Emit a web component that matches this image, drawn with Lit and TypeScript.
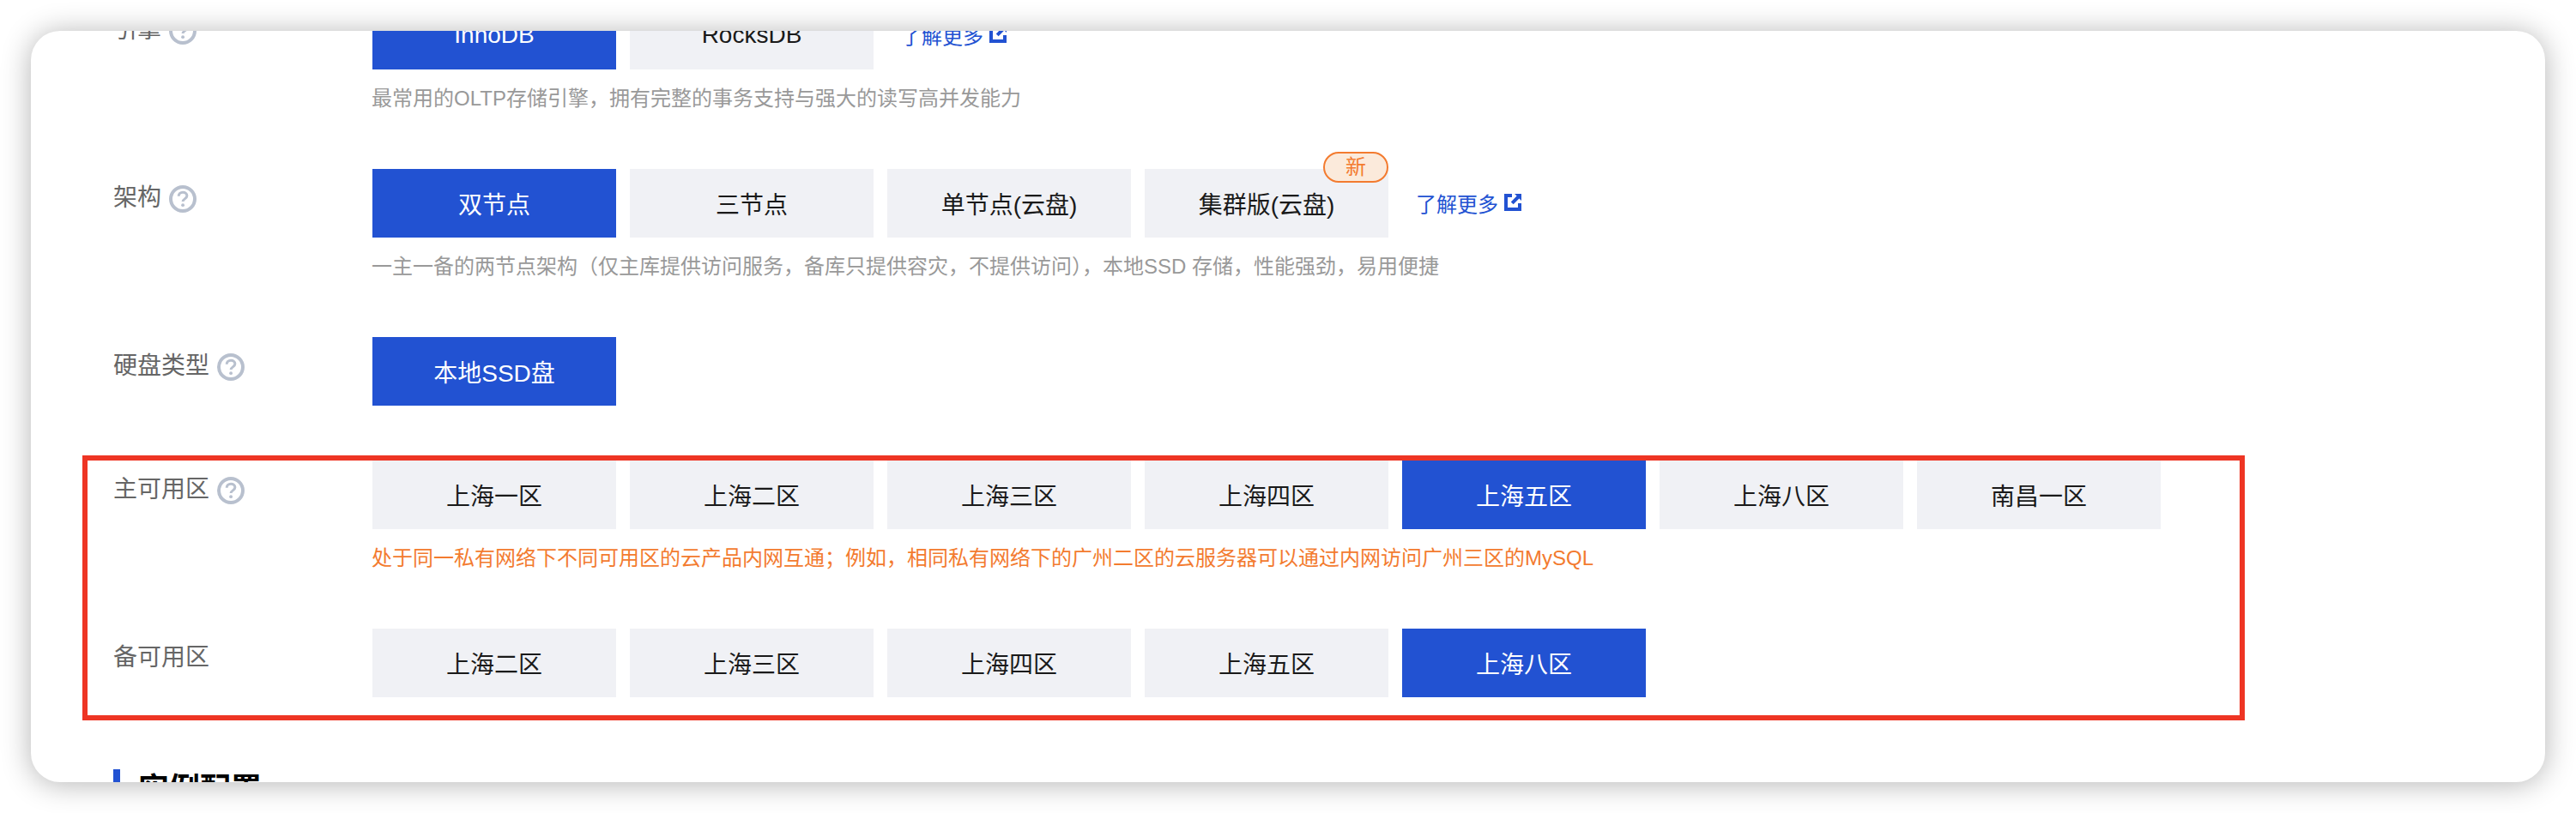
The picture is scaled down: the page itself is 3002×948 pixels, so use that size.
import { LitElement, html, css, svg } from "lit";
import { customElement } from "lit/decorators.js";

type Opt = { text: string; active?: boolean; badge?: string };
type Row = {
  label: string;
  help?: boolean;
  options: Opt[];
  more?: boolean;
  hint?: string;
  warn?: boolean;
};

const names = (list: string[], active: string): Opt[] =>
  list.map((text) => ({ text, active: text === active }));

const rows: Row[] = [
  {
    label: "引擎",
    help: true,
    options: names(["InnoDB", "RocksDB"], "InnoDB"),
    more: true,
    hint: "最常用的OLTP存储引擎，拥有完整的事务支持与强大的读写高并发能力",
  },
  {
    label: "架构",
    help: true,
    options: [
      { text: "双节点", active: true },
      { text: "三节点" },
      { text: "单节点(云盘)" },
      { text: "集群版(云盘)", badge: "新" },
    ],
    more: true,
    hint: "一主一备的两节点架构（仅主库提供访问服务，备库只提供容灾，不提供访问），本地SSD 存储，性能强劲，易用便捷",
  },
  { label: "硬盘类型", help: true, options: names(["本地SSD盘"], "本地SSD盘") },
  {
    label: "主可用区",
    help: true,
    options: names(
      ["上海一区", "上海二区", "上海三区", "上海四区", "上海五区", "上海八区", "南昌一区"],
      "上海五区",
    ),
    hint: "处于同一私有网络下不同可用区的云产品内网互通；例如，相同私有网络下的广州二区的云服务器可以通过内网访问广州三区的MySQL",
    warn: true,
  },
  {
    label: "备可用区",
    options: names(["上海二区", "上海三区", "上海四区", "上海五区", "上海八区"], "上海八区"),
  },
];

const helpIcon = svg`<svg class="help" viewBox="0 0 32 32" aria-hidden="true">
  <circle cx="16" cy="16" r="14" fill="none" stroke="#b8c0ce" stroke-width="4"></circle>
  <path d="M11.2 12.8c0-2.8 2.2-4.6 4.9-4.6s4.8 1.6 4.8 4.1c0 3.6-4.8 3.5-4.8 6.7" fill="none" stroke="#b8c0ce" stroke-width="3"></path>
  <circle cx="16.1" cy="23.2" r="1.9" fill="#b8c0ce"></circle>
</svg>`;

const linkIcon = svg`<svg class="link-icon" viewBox="0 0 20 20" aria-hidden="true">
  <path fill="#2252d2" fill-rule="evenodd" d="M0 0H9V4H4V16H16V11H20V20H0Z"></path>
  <path fill="#2252d2" d="M12 0H20V8L17.4 5.4L10.6 12.2L7.8 9.4L14.6 2.6Z"></path>
</svg>`;

@customElement("app-root")
export class AppRoot extends LitElement {
  static styles = css`
    :host {
      display: block;
      width: 3002px;
      height: 948px;
      background: #fff;
      font-family: "Liberation Sans", "Noto Sans CJK SC", sans-serif;
      overflow: hidden;
    }
    .stage {
      box-sizing: border-box;
      height: 948px;
      padding: 36px;
    }
    .card {
      position: relative;
      height: 876px;
      border-radius: 34px;
      background: #fff;
      box-shadow: 0 2px 34px rgba(0, 0, 0, 0.3);
      overflow: hidden;
    }
    .content {
      margin-top: -35px;
      padding-left: 97px;
      display: flex;
      flex-direction: column;
      gap: 64px;
    }
    .row {
      display: grid;
      grid-template-columns: 301px 1fr;
    }
    .label {
      display: flex;
      align-items: center;
      gap: 8px;
      height: 40px;
      margin: 14px 0 0 -1px;
      font-size: 28px;
      line-height: 40px;
      color: #666;
    }
    .help {
      width: 32px;
      height: 32px;
      flex: none;
      margin: 2px 0 0 1px;
    }
    .options {
      display: flex;
      align-items: center;
      gap: 16px;
    }
    .opt {
      position: relative;
      width: 284px;
      height: 80px;
      display: flex;
      align-items: center;
      justify-content: center;
      font-size: 28px;
      color: #1a1a1a;
      background: #f0f1f5;
    }
    .opt.active {
      background: #2252d2;
      color: #fff;
    }
    .badge {
      position: absolute;
      top: -20px;
      right: 0;
      box-sizing: border-box;
      width: 76px;
      height: 36px;
      display: flex;
      align-items: center;
      justify-content: center;
      border: 2px solid #f37b2f;
      border-radius: 18px;
      background: #fbeadb;
      color: #f37b2f;
      font-size: 24px;
      line-height: 32px;
    }
    .more {
      display: flex;
      align-items: center;
      gap: 7px;
      margin-left: 16px;
      margin-bottom: 2px;
      font-size: 24px;
      color: #2252d2;
    }
    .link-icon {
      width: 20px;
      height: 20px;
      flex: none;
    }
    .hint {
      margin: 16px 0 0 -1px;
      font-size: 24px;
      line-height: 36px;
      color: #999;
    }
    .hint.warn {
      color: #f37b2f;
    }
    .section {
      display: flex;
      align-items: center;
      gap: 21px;
      height: 48px;
      margin-top: 20px;
      font-size: 36px;
      font-weight: 700;
      line-height: 48px;
      color: #000;
    }
    .section::before {
      content: "";
      width: 8px;
      height: 48px;
      margin-left: -1px;
      background: #2252d2;
    }
    .frame {
      position: absolute;
      left: 60px;
      top: 495px;
      width: 2520px;
      height: 309px;
      box-sizing: border-box;
      border: 6px solid #ee3524;
      pointer-events: none;
    }
  `;

  private renderOption(o: Opt) {
    return html`<div class="opt ${o.active ? "active" : ""}">
      ${o.text}${o.badge ? html`<span class="badge">${o.badge}</span>` : ""}
    </div>`;
  }

  private renderRow(r: Row) {
    return html`<div class="row">
      <div class="label">${r.label}${r.help ? helpIcon : ""}</div>
      <div>
        <div class="options">
          ${r.options.map((o) => this.renderOption(o))}
          ${r.more ? html`<span class="more">了解更多${linkIcon}</span>` : ""}
        </div>
        ${r.hint ? html`<div class="hint ${r.warn ? "warn" : ""}">${r.hint}</div>` : ""}
      </div>
    </div>`;
  }

  render() {
    return html`<div class="stage">
      <div class="card">
        <div class="content">
          ${rows.map((r) => this.renderRow(r))}
          <div class="section">实例配置</div>
        </div>
        <div class="frame"></div>
      </div>
    </div>`;
  }
}
